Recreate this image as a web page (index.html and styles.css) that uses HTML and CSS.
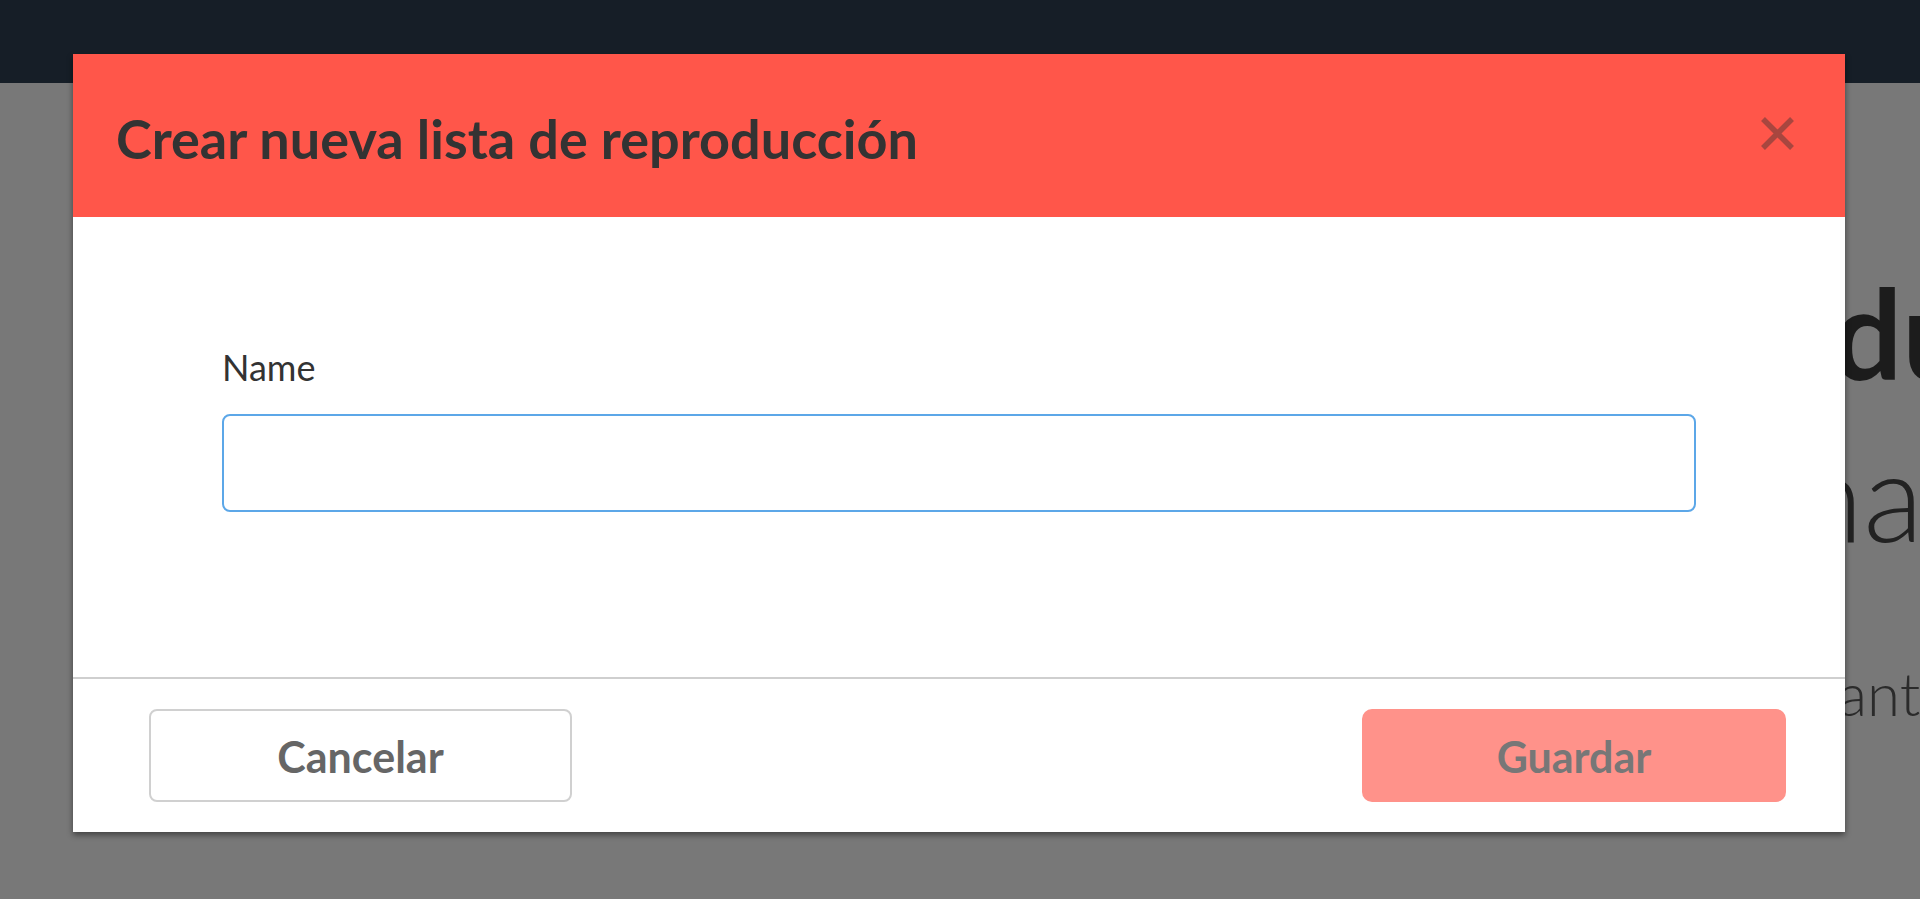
FILE: index.html
```html
<!DOCTYPE html>
<html lang="es">
<head>
<meta charset="utf-8">
<title>Crear nueva lista de reproducción</title>
<link rel="stylesheet" href="styles.css">
</head>
<body>
<header class="topbar"></header>
<main class="page">
  <h1 class="hero-title">du</h1>
  <p class="hero-sub">na</p>
  <p class="hero-text">anta</p>
</main>

<div class="modal" role="dialog" aria-labelledby="modal-title">
  <div class="modal-header">
    <h2 class="modal-title" id="modal-title">Crear nueva lista de reproducción</h2>
    <button class="modal-close" type="button" aria-label="Cerrar">
      <svg width="35" height="35" viewBox="0 0 35 35" aria-hidden="true">
        <path d="M3 3 L32 32 M32 3 L3 32" stroke="currentColor" stroke-width="5.5" fill="none"/>
      </svg>
    </button>
  </div>
  <div class="modal-body">
    <label class="field-label" for="name">Name</label>
    <input class="field-input" id="name" type="text">
  </div>
  <div class="modal-footer">
    <button class="btn btn-cancel" type="button">Cancelar</button>
    <button class="btn btn-save" type="button">Guardar</button>
  </div>
</div>
</body>
</html>
```
FILE: styles.css
```css
html, body {
  margin: 0;
  padding: 0;
  height: 100%;
  overflow: hidden;
}

body {
  background: #787878;
  font-family: Lato, "Open Sans", sans-serif;
}

.topbar {
  height: 83px;
  background: #161e27;
}

.page {
  white-space: nowrap;
}

.hero-title {
  margin: 174px 0 0 1832px;
  font-size: 124px;
  font-weight: 700;
  line-height: 150px;
  color: #1c1c1c;
}

.hero-sub {
  margin: 12px 0 0 1795px;
  font-size: 124px;
  font-weight: 300;
  line-height: 150px;
  color: #222;
}

.hero-text {
  margin: 88px 0 0 1838px;
  font-size: 60px;
  font-weight: 300;
  line-height: 72px;
  color: #2b2b2b;
}

.modal {
  position: absolute;
  top: 54px;
  left: 73px;
  width: 1772px;
  background: #fff;
  box-shadow: 0 3px 6px rgba(0, 0, 0, 0.45);
}

.modal-header {
  height: 163px;
  background: #ff564a;
  display: flex;
  align-items: center;
  justify-content: space-between;
  padding: 0 50px 0 43px;
}

.modal-title {
  margin: 0;
  padding-top: 6px;
  font-size: 54px;
  font-weight: 700;
  line-height: 65px;
  color: #333;
}

.modal-close {
  margin: 0 0 4px 0;
  padding: 0;
  border: 0;
  background: none;
  width: 35px;
  height: 35px;
  color: #a8463f;
  display: flex;
}

.modal-body {
  padding: 129px 149px 165px;
  border-bottom: 2px solid #cfcfcf;
  display: flex;
  flex-direction: column;
}

.field-label {
  font-size: 36px;
  line-height: 43px;
  color: #333;
  margin-bottom: 25px;
}

.field-input {
  box-sizing: border-box;
  height: 98px;
  width: 100%;
  border: 2px solid #5ca7e8;
  border-radius: 8px;
  background: #fff;
  outline: none;
  margin: 0;
}

.modal-footer {
  height: 153px;
  box-sizing: border-box;
  padding: 30px 59px 30px 76px;
  display: flex;
  justify-content: space-between;
  align-items: center;
}

.btn {
  box-sizing: border-box;
  height: 93px;
  font-family: Lato, "Open Sans", sans-serif;
  font-size: 43px;
  font-weight: 700;
  line-height: 52px;
  padding: 2px 0 0;
  cursor: pointer;
}

.btn-cancel {
  width: 423px;
  background: #fff;
  border: 2px solid #d0d0d0;
  border-radius: 8px;
  color: #666;
}

.btn-save {
  width: 424px;
  background: #ff928a;
  border: 0;
  border-radius: 10px;
  color: #777;
}
```
